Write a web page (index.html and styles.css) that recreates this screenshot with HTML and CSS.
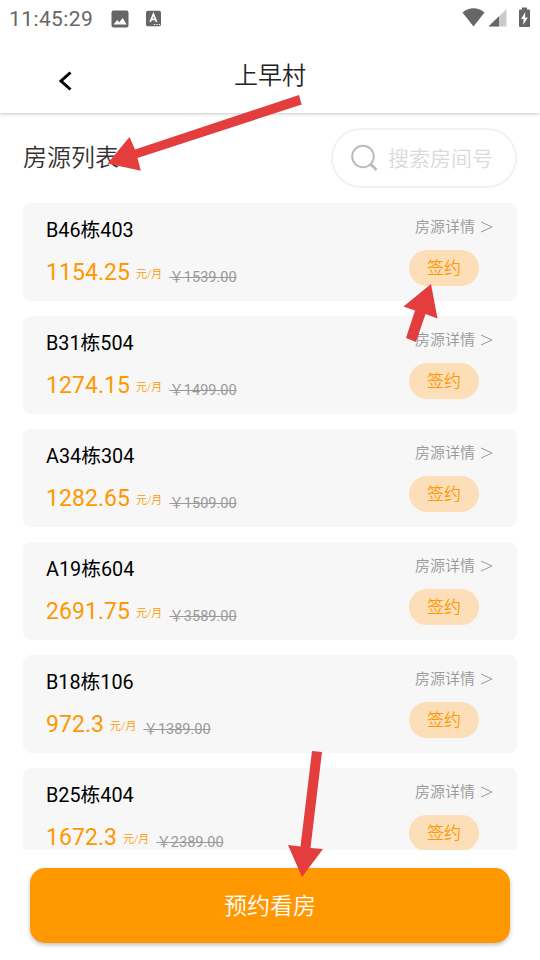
FILE: index.html
```html
<!DOCTYPE html>
<html lang="zh-CN">
<head>
<meta charset="utf-8">
<title>上早村</title>
<link rel="stylesheet" href="styles.css">
</head>
<body>
<div class="screen">
  <div class="status">
    <span class="time">11:45:29</span>
    <svg class="picture" width="18" height="18" viewBox="0 0 18 18"><rect x=".5" y=".5" width="17" height="17" rx="2" fill="#666"/><path d="M2.500 14.500L6.200 10l2 2.300L11.700 8l4 6.500z" fill="#fff"/></svg>
    <svg class="keyboard" width="15" height="17" viewBox="0 0 15 17"><rect y=".7" width="15" height="15.600" rx="1.700" fill="#666"/><path d="M4.200 11.800L7.400 4.200l3.200 7.600M5.300 9.400h4.200" fill="none" stroke="#fff" stroke-width="1.700"/><path d="M7.800 14.500h1.300M10.300 14.500h1.300M12.800 14.500h1.200" stroke="#fff" stroke-width="1.200"/></svg>
    <svg class="signals" width="70" height="22" viewBox="0 0 70 22"><path d="M.5 5.500Q11.500-2.800 22.500 5.500L11.500 19.500z" fill="#666"/><path d="M44.500 2v17.500H26.500z" fill="#cacaca"/><path d="M37 9.300v10.200H26.500z" fill="#666"/><path d="M58 2.500h2V.5h5v2h2q1 0 1 1V19q0 1-1 1h-9q-1 0-1-1V3.500q0-1 1-1z" fill="#666"/><path d="M63.300 5l-4.200 7h2.500l-.4 6 4.600-7.500H63z" fill="#fff"/></svg>
  </div>
  <header class="nav">
    <svg class="back" width="14" height="22" viewBox="0 0 14 22"><path d="M12.500 2.500L3 11l9.500 8.500" fill="none" stroke="#000" stroke-width="3"/></svg>
    <h1>上早村</h1>
  </header>
  <div class="toolbar">
    <h2>房源列表</h2>
    <div class="search">
      <svg width="28" height="28" viewBox="0 0 28 28" fill="none" stroke="#bbb" stroke-width="2"><circle cx="12" cy="12.500" r="10.800"/><path d="M19.500 20l6 6" stroke-width="2.600"/></svg>
      <span>搜索房间号</span>
    </div>
  </div>
  <main class="list">
    <article class="card"><div class="info"><h3>B46栋403</h3><p><b>1154.25</b><i>元/月</i><s>￥1539.00</s></p></div><div class="side"><a>房源详情<svg width="13" height="12" viewBox="0 0 13 12"><path d="M1 1l11 5L1 11"/></svg></a><button>签约</button></div></article>
    <article class="card"><div class="info"><h3>B31栋504</h3><p><b>1274.15</b><i>元/月</i><s>￥1499.00</s></p></div><div class="side"><a>房源详情<svg width="13" height="12" viewBox="0 0 13 12"><path d="M1 1l11 5L1 11"/></svg></a><button>签约</button></div></article>
    <article class="card"><div class="info"><h3>A34栋304</h3><p><b>1282.65</b><i>元/月</i><s>￥1509.00</s></p></div><div class="side"><a>房源详情<svg width="13" height="12" viewBox="0 0 13 12"><path d="M1 1l11 5L1 11"/></svg></a><button>签约</button></div></article>
    <article class="card"><div class="info"><h3>A19栋604</h3><p><b>2691.75</b><i>元/月</i><s>￥3589.00</s></p></div><div class="side"><a>房源详情<svg width="13" height="12" viewBox="0 0 13 12"><path d="M1 1l11 5L1 11"/></svg></a><button>签约</button></div></article>
    <article class="card"><div class="info"><h3>B18栋106</h3><p><b>972.3</b><i>元/月</i><s>￥1389.00</s></p></div><div class="side"><a>房源详情<svg width="13" height="12" viewBox="0 0 13 12"><path d="M1 1l11 5L1 11"/></svg></a><button>签约</button></div></article>
    <article class="card"><div class="info"><h3>B25栋404</h3><p><b>1672.3</b><i>元/月</i><s>￥2389.00</s></p></div><div class="side"><a>房源详情<svg width="13" height="12" viewBox="0 0 13 12"><path d="M1 1l11 5L1 11"/></svg></a><button>签约</button></div></article>
  </main>
  <button class="book">预约看房</button>
  <svg class="arrows" width="540" height="960" viewBox="0 0 540 960" fill="#e43d3d">
    <path d="M299 95l2.700 9.500L137.500 158l3.300 12.800L107.500 163.500 129.500 137l5.500 12.500z"/>
    <path d="M431 284l6.500 34.500-12-4.500-9.500 28-10-4 9-27.500-11.500-4z"/>
    <path d="M312 751l10 1-11.500 96 12.500 1-21 28-14-32 12.500 1.500z"/>
  </svg>
</div>
</body>
</html>
```
FILE: styles.css
```css
* { box-sizing: border-box; }
body { margin: 0; background: #fff; font-family: Roboto, "Noto Sans CJK SC", sans-serif; font-weight: 350; }
h1, h2, h3, p { margin: 0; font-weight: 350; }
button { border: 0; padding: 0; font-family: inherit; font-weight: 350; }
.screen { position: relative; width: 540px; height: 960px; overflow: hidden; display: flex; flex-direction: column; }
.status { height: 38px; flex: none; display: flex; align-items: center; padding: 0 9px 1px; color: #666; }
.time { width: 102px; font-size: 21px; font-weight: 400; letter-spacing: .4px; line-height: 36px; }
.keyboard { margin-left: 17px; }
.signals { margin-left: auto; margin-right: -1px; margin-top: -2px; }
.nav { height: 75px; flex: none; display: grid; grid-template-columns: 82px 1fr 82px; align-items: center; box-shadow: 0 1px 3px rgba(0,0,0,.22); clip-path: inset(0 0 -6px 0); }
.back { margin: 10px 0 0 58px; }
.nav h1 { text-align: center; font-size: 24px; line-height: 34px; color: #222; }
.toolbar { height: 90px; flex: none; display: flex; align-items: center; justify-content: space-between; padding: 0 23px; }
.toolbar h2 { font-size: 24px; line-height: 34px; color: #333; }
.search { width: 186px; height: 60px; border: 2px solid #f2f2f2; border-radius: 30px; display: flex; align-items: center; gap: 9px; padding-left: 18px; color: #dadada; font-size: 21px; }
.search span { position: relative; top: -1px; }
.list { height: 647px; flex: none; overflow: hidden; display: flex; flex-direction: column; gap: 15px; padding: 0 23px; }
.card { height: 98px; flex: none; display: flex; justify-content: space-between; padding: 0 24px 0 23px; background: #f7f7f7; border-radius: 8px; }
.info { padding-top: 13px; }
.info h3 { font-size: 19.8px; line-height: 30px; color: #000; font-weight: 370; }
.info p { display: flex; align-items: baseline; margin-top: 12px; line-height: 30px; }
.info b { font-size: 23px; font-weight: 370; letter-spacing: .05px; color: #ff9800; }
.info i { font-size: 11px; font-style: normal; color: #ff9800; margin-left: 6px; position: relative; top: -2px; }
.info s { font-size: 14.5px; font-weight: 370; color: #999; margin-left: 7px; position: relative; top: 2px; }
.side { padding-top: 13px; }
.side a { display: flex; align-items: center; gap: 5px; margin-left: 6px; font-size: 15px; line-height: 22px; color: #999; }
.side svg { fill: none; stroke: #999; margin-top: -1px; }
.side button { display: block; width: 70px; height: 36px; margin-top: 12px; border-radius: 18px; background: #fcdfb8; color: #ff9800; font-size: 17px; line-height: 35px; }
.book { width: 480px; height: 75px; flex: none; margin: 18px auto 0; padding-bottom: 3px; border-radius: 15px; background: #ff9800; color: #fff; font-size: 23px; box-shadow: 0 2px 4px rgba(0,0,0,.25); }
.arrows { position: absolute; left: 0; top: 0; }
```
